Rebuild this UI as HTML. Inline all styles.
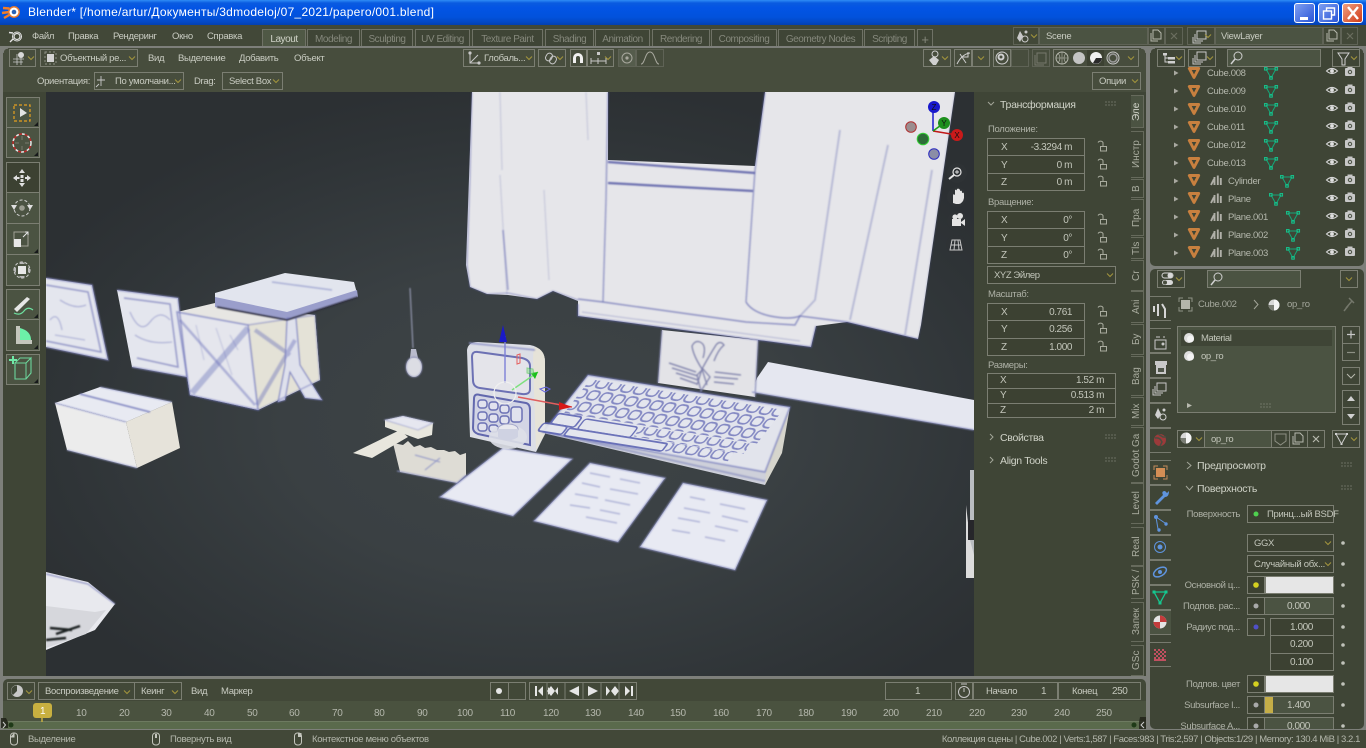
<!DOCTYPE html>
<html><head><meta charset="utf-8"><style>
*{box-sizing:border-box}
html,body{margin:0;padding:0;width:1366px;height:748px;overflow:hidden;background:#7d7f7a}
body{position:relative;font:10px "Liberation Sans","DejaVu Sans",sans-serif;color:#c9ccc2}
div,i,b{position:absolute;font-style:normal;font-weight:normal}
.p{background:#3f4536}
.h{background:#474d3d}
.b{border:1px solid #7b7e72}
.f{background:#4b5342;border:1px solid #7b7e72}
.a{background:#3c4132;border:1px solid #7b7e72}
i{white-space:nowrap;line-height:12px;height:12px;margin-top:1px;letter-spacing:-.32px;filter:blur(.2px)}
.tab{border:1px solid #6f7266;border-bottom:0;top:29px;height:17px;color:#85887c;text-align:center;line-height:19px;background:#3f4536;letter-spacing:-.45px}
.vt{writing-mode:vertical-rl;transform:rotate(180deg);text-align:center;left:1131px;width:13px;border:1px solid #666a5c;border-right:0;color:#a9ac9f;line-height:11px;background:#3f4536;font-size:10px}
.w{color:#b4b7ac}
.pt{left:1150px;width:21px;height:25px;border-top:1px solid #777a6e;border-bottom:1px solid #777a6e;background:#3f4536}
.l{color:#aeb1a6}
.n{color:#c3c6bb;letter-spacing:-.42px}
.hd{font-size:10.5px;color:#d0d3c8;letter-spacing:-.3px}
svg{position:absolute;left:0;top:0}
</style></head><body>

<!-- title bar -->
<div style="left:0;top:0;width:1366px;height:25px;background:linear-gradient(#2f8cf5 0,#0a5be0 3px,#0354e4 8px,#0252dc 17px,#0348c6 22px,#0340b0 25px)"></div>
<i style="left:28px;top:5px;font-size:12px;color:#fff;letter-spacing:.27px;line-height:13px;filter:none">Blender* [/home/artur/Документы/3dmodeloj/07_2021/papero/001.blend]</i>
<div style="left:1294px;top:3px;width:21px;height:20px;border:1px solid #fff;border-radius:3px;background:linear-gradient(135deg,#7f9ff0,#2a55d8)"></div>
<div style="left:1318px;top:3px;width:21px;height:20px;border:1px solid #fff;border-radius:3px;background:linear-gradient(135deg,#7f9ff0,#2a55d8)"></div>
<div style="left:1342px;top:3px;width:21px;height:20px;border:1px solid #fff;border-radius:3px;background:linear-gradient(135deg,#f0a080,#d03a18)"></div>

<!-- top bar -->
<div class="p" style="left:0;top:25px;width:1366px;height:21px;background:#424838"></div>
<i style="left:32px;top:30px;font-size:9.5px">Файл</i><i style="left:68px;top:30px;font-size:9.5px">Правка</i><i style="left:113px;top:30px;font-size:9.5px">Рендеринг</i><i style="left:172px;top:30px;font-size:9.5px">Окно</i><i style="left:207px;top:30px;font-size:9.5px">Справка</i>
<div class="tab" style="left:262px;width:44px;background:#4f5845;color:#d0d3c8">Layout</div>
<div class="tab" style="left:307px;width:53px">Modeling</div>
<div class="tab" style="left:361px;width:52px">Sculpting</div>
<div class="tab" style="left:415px;width:55px">UV Editing</div>
<div class="tab" style="left:472px;width:71px">Texture Paint</div>
<div class="tab" style="left:545px;width:49px">Shading</div>
<div class="tab" style="left:595px;width:55px">Animation</div>
<div class="tab" style="left:652px;width:58px">Rendering</div>
<div class="tab" style="left:711px;width:66px">Compositing</div>
<div class="tab" style="left:778px;width:85px">Geometry Nodes</div>
<div class="tab" style="left:864px;width:51px">Scripting</div>
<div class="tab" style="left:917px;width:16px;font-size:13px">+</div>
<div class="b" style="left:1013px;top:27px;width:26px;height:18px;border-color:#5f6356"></div>
<div class="f" style="left:1039px;top:27px;width:109px;height:18px;border-color:#5f6356"></div>
<div class="b" style="left:1148px;top:27px;width:17px;height:18px;border-color:#5f6356"></div>
<div class="b" style="left:1165px;top:27px;width:18px;height:18px;border-color:#5f6356"></div>
<i style="left:1046px;top:30px;font-size:9.5px">Scene</i>
<div class="b" style="left:1187px;top:27px;width:28px;height:18px;border-color:#5f6356"></div>
<div class="f" style="left:1215px;top:27px;width:108px;height:18px;border-color:#5f6356"></div>
<div class="b" style="left:1323px;top:27px;width:18px;height:18px;border-color:#5f6356"></div>
<div class="b" style="left:1341px;top:27px;width:17px;height:18px;border-color:#5f6356"></div>
<i style="left:1221px;top:30px;font-size:9.5px">ViewLayer</i>

<!-- 3D view -->
<div class="h" style="left:3px;top:48px;width:1143px;height:44px;border-radius:5px 5px 0 0"></div>
<div class="p" style="left:3px;top:92px;width:43px;height:584px"></div>
<div style="left:46px;top:92px;width:928px;height:584px;background:radial-gradient(ellipse 560px 340px at 490px 330px,#3e4447 0,#3a4043 45%,#2f3437 85%,#2c3033 100%)"></div>
<div class="p" style="left:974px;top:92px;width:172px;height:584px"></div>

<!-- header row 1 -->
<div class="b" style="left:9px;top:49px;width:27px;height:18px"></div>
<div class="b" style="left:40px;top:49px;width:98px;height:18px"></div>
<i style="left:60px;top:52px;font-size:9.5px">Объектный ре...</i>
<i style="left:148px;top:52px;font-size:9.5px">Вид</i><i style="left:178px;top:52px;font-size:9.5px">Выделение</i><i style="left:239px;top:52px;font-size:9.5px">Добавить</i><i style="left:294px;top:52px;font-size:9.5px">Объект</i>
<div class="b" style="left:463px;top:49px;width:72px;height:18px"></div><i style="left:484px;top:52px;font-size:9.5px">Глобаль...</i>
<div class="b" style="left:538px;top:49px;width:28px;height:18px"></div>
<div class="b" style="left:570px;top:49px;width:17px;height:18px"></div>
<div class="b" style="left:587px;top:49px;width:27px;height:18px"></div>
<div class="f" style="left:618px;top:49px;width:18px;height:18px;background:#555c4c;border-color:#5f6356"></div>
<div class="b" style="left:636px;top:49px;width:28px;height:18px;border-color:#5f6356"></div>
<div class="b" style="left:923px;top:49px;width:28px;height:18px"></div>
<div class="b" style="left:954px;top:49px;width:18px;height:18px"></div>
<div class="b" style="left:972px;top:49px;width:18px;height:18px"></div>
<div class="b" style="left:993px;top:49px;width:18px;height:18px"></div>
<div class="b" style="left:1011px;top:49px;width:18px;height:18px;border-color:#5f6356"></div>
<div class="b" style="left:1032px;top:49px;width:18px;height:18px;border-color:#5f6356"></div>
<div class="b" style="left:1053px;top:49px;width:86px;height:18px"></div>
<div style="left:1087px;top:50px;width:17px;height:16px;background:#3c4132"></div>

<!-- header row 2 -->
<i style="left:37px;top:75px;font-size:9.5px">Ориентация:</i>
<div class="b" style="left:94px;top:72px;width:90px;height:18px"></div><i style="left:115px;top:75px;font-size:9.5px">По умолчани...</i>
<i style="left:194px;top:75px;font-size:9.5px">Drag:</i>
<div class="b" style="left:222px;top:72px;width:61px;height:18px"></div><i style="left:229px;top:75px;font-size:9.5px">Select Box</i>
<div class="b" style="left:1092px;top:72px;width:49px;height:18px"></div><i style="left:1099px;top:75px;font-size:9.5px">Опции</i>

<!-- left tools -->
<div class="f" style="left:6px;top:97px;width:34px;height:31px"></div>
<div class="f" style="left:6px;top:127px;width:34px;height:31px"></div>
<div class="a" style="left:6px;top:162px;width:34px;height:31px"></div>
<div class="f" style="left:6px;top:192px;width:34px;height:32px"></div>
<div class="f" style="left:6px;top:223px;width:34px;height:32px"></div>
<div class="f" style="left:6px;top:254px;width:34px;height:32px"></div>
<div class="f" style="left:6px;top:289px;width:34px;height:31px"></div>
<div class="f" style="left:6px;top:319px;width:34px;height:32px"></div>
<div class="f" style="left:6px;top:354px;width:34px;height:31px"></div>

<!-- N panel -->
<i class="hd" style="left:1000px;top:98px">Трансформация</i>
<i class="l" style="left:988px;top:123px;font-size:9.5px">Положение:</i>
<div class="a" style="left:987px;top:138px;width:98px;height:18px"></div><div class="a" style="left:987px;top:155px;width:98px;height:19px"></div><div class="a" style="left:987px;top:173px;width:98px;height:18px"></div>
<i class="n" style="left:1001px;top:141px">X</i><i class="n" style="right:294px;top:141px">-3.3294 m</i>
<i class="n" style="left:1001px;top:159px">Y</i><i class="n" style="right:294px;top:159px">0 m</i>
<i class="n" style="left:1001px;top:176px">Z</i><i class="n" style="right:294px;top:176px">0 m</i>
<i class="l" style="left:988px;top:196px;font-size:9.5px">Вращение:</i>
<div class="a" style="left:987px;top:211px;width:98px;height:18px"></div><div class="a" style="left:987px;top:228px;width:98px;height:19px"></div><div class="a" style="left:987px;top:246px;width:98px;height:18px"></div>
<i class="n" style="left:1001px;top:214px">X</i><i class="n" style="right:294px;top:214px">0°</i>
<i class="n" style="left:1001px;top:232px">Y</i><i class="n" style="right:294px;top:232px">0°</i>
<i class="n" style="left:1001px;top:249px">Z</i><i class="n" style="right:294px;top:249px">0°</i>
<div class="a" style="left:987px;top:266px;width:129px;height:18px"></div><i class="n" style="left:994px;top:269px;font-size:9.5px">XYZ Эйлер</i>
<i class="l" style="left:988px;top:288px;font-size:9.5px">Масштаб:</i>
<div class="a" style="left:987px;top:303px;width:98px;height:18px"></div><div class="a" style="left:987px;top:320px;width:98px;height:19px"></div><div class="a" style="left:987px;top:338px;width:98px;height:18px"></div>
<i class="n" style="left:1001px;top:306px">X</i><i class="n" style="right:294px;top:306px">0.761</i>
<i class="n" style="left:1001px;top:323px">Y</i><i class="n" style="right:294px;top:323px">0.256</i>
<i class="n" style="left:1001px;top:341px">Z</i><i class="n" style="right:294px;top:341px">1.000</i>
<i class="l" style="left:988px;top:359px;font-size:9.5px">Размеры:</i>
<div class="a" style="left:987px;top:373px;width:129px;height:16px"></div><div class="a" style="left:987px;top:388px;width:129px;height:16px"></div><div class="a" style="left:987px;top:403px;width:129px;height:15px"></div>
<i class="n" style="left:1000px;top:374px">X</i><i class="n" style="right:262px;top:374px">1.52 m</i>
<i class="n" style="left:1000px;top:389px">Y</i><i class="n" style="right:262px;top:389px">0.513 m</i>
<i class="n" style="left:1000px;top:404px">Z</i><i class="n" style="right:262px;top:404px">2 m</i>
<i class="hd" style="left:1000px;top:431px">Свойства</i>
<i class="hd" style="left:1000px;top:454px">Align Tools</i>

<!-- N tabs -->
<div class="vt" style="top:95px;height:33px;background:#4b5342;color:#d0d3c8">Эле</div>
<div class="vt" style="top:131px;height:47px">Инстр</div>
<div class="vt" style="top:179px;height:19px">B</div>
<div class="vt" style="top:199px;height:37px">Пра</div>
<div class="vt" style="top:237px;height:22px">Tls</div>
<div class="vt" style="top:260px;height:31px">Cr</div>
<div class="vt" style="top:291px;height:32px">Ani</div>
<div class="vt" style="top:324px;height:31px">Бу</div>
<div class="vt" style="top:356px;height:40px">Bag</div>
<div class="vt" style="top:397px;height:29px">Mix</div>
<div class="vt" style="top:427px;height:56px">Godot Ga</div>
<div class="vt" style="top:483px;height:41px">Level</div>
<div class="vt" style="top:527px;height:39px">Real</div>
<div class="vt" style="top:566px;height:33px">PSK /</div>
<div class="vt" style="top:602px;height:40px">Запек</div>
<div class="vt" style="top:645px;height:31px">GSc</div>

<!-- outliner -->
<div class="p" style="left:1150px;top:48px;width:214px;height:218px;border-radius:5px"></div>
<div class="b" style="left:1157px;top:49px;width:28px;height:18px"></div>
<div class="b" style="left:1188px;top:49px;width:28px;height:18px"></div>
<div class="f" style="left:1227px;top:49px;width:94px;height:18px"></div>
<div class="b" style="left:1332px;top:49px;width:28px;height:18px"></div>
<i style="left:1207px;top:67px;font-size:9.5px" class="w">Cube.008</i>
<i style="left:1207px;top:85px;font-size:9.5px" class="w">Cube.009</i>
<i style="left:1207px;top:103px;font-size:9.5px" class="w">Cube.010</i>
<i style="left:1207px;top:121px;font-size:9.5px" class="w">Cube.011</i>
<i style="left:1207px;top:139px;font-size:9.5px" class="w">Cube.012</i>
<i style="left:1207px;top:157px;font-size:9.5px" class="w">Cube.013</i>
<i style="left:1228px;top:175px;font-size:9.5px" class="w">Cylinder</i>
<i style="left:1228px;top:193px;font-size:9.5px" class="w">Plane</i>
<i style="left:1228px;top:211px;font-size:9.5px" class="w">Plane.001</i>
<i style="left:1228px;top:229px;font-size:9.5px" class="w">Plane.002</i>
<i style="left:1228px;top:247px;font-size:9.5px" class="w">Plane.003</i>

<!-- properties -->
<div class="p" style="left:1150px;top:269px;width:214px;height:460px;border-radius:5px"></div>
<div class="b" style="left:1157px;top:270px;width:28px;height:18px"></div>
<div class="f" style="left:1207px;top:270px;width:94px;height:18px"></div>
<div class="b" style="left:1340px;top:270px;width:18px;height:18px"></div>
<div class="pt" style="top:296px"></div><div class="pt" style="top:328px"></div><div class="pt" style="top:353px"></div><div class="pt" style="top:378px"></div><div class="pt" style="top:403px"></div><div class="pt" style="top:428px"></div>
<div class="pt" style="top:460px"></div><div class="pt" style="top:485px"></div><div class="pt" style="top:510px"></div><div class="pt" style="top:535px"></div><div class="pt" style="top:560px"></div><div class="pt" style="top:585px"></div>
<div class="pt" style="top:610px;background:#4b5342"></div><div class="pt" style="top:642px"></div>
<i style="left:1198px;top:298px;font-size:9.5px;color:#a4a79c">Cube.002</i>
<i style="left:1287px;top:298px;font-size:9.5px;color:#a4a79c">op_ro</i>
<div class="f" style="left:1177px;top:326px;width:159px;height:87px"></div>
<div style="left:1181px;top:330px;width:151px;height:16px;background:#3f4536"></div>
<i style="left:1201px;top:332px;font-size:9.5px" class="n">Material</i>
<i style="left:1201px;top:350px;font-size:9.5px" class="n">op_ro</i>
<div class="b" style="left:1342px;top:326px;width:18px;height:18px"></div><div class="b" style="left:1342px;top:343px;width:18px;height:18px"></div>
<div class="b" style="left:1342px;top:367px;width:18px;height:18px"></div>
<div class="b" style="left:1342px;top:390px;width:18px;height:18px"></div><div class="b" style="left:1342px;top:407px;width:18px;height:18px"></div>

<div class="b" style="left:1177px;top:430px;width:28px;height:18px"></div>
<div class="f" style="left:1204px;top:430px;width:68px;height:18px"></div>
<i style="left:1211px;top:433px;font-size:9.5px" class="n">op_ro</i>
<div class="b" style="left:1271px;top:430px;width:19px;height:18px"></div><div class="b" style="left:1289px;top:430px;width:19px;height:18px"></div><div class="b" style="left:1307px;top:430px;width:18px;height:18px"></div>
<div class="b" style="left:1332px;top:430px;width:28px;height:18px"></div>
<i class="hd" style="left:1197px;top:459px;letter-spacing:-.2px">Предпросмотр</i>
<i class="hd" style="left:1197px;top:482px;letter-spacing:-.25px">Поверхность</i>
<i class="l" style="right:126px;top:508px;font-size:9.5px">Поверхность</i>
<div class="a" style="left:1247px;top:505px;width:87px;height:18px"></div><i class="n" style="left:1267px;top:508px;font-size:9.5px;letter-spacing:-.3px">Принц...ый BSDF</i>
<div class="a" style="left:1247px;top:534px;width:87px;height:18px"></div><i class="n" style="left:1254px;top:537px;font-size:9.5px">GGX</i>
<div class="a" style="left:1247px;top:555px;width:87px;height:18px"></div><i class="n" style="left:1254px;top:558px;font-size:9.5px;letter-spacing:-.3px">Случайный обх...</i>
<i class="l" style="right:126px;top:579px;font-size:9.5px">Основной ц...</i>
<div class="a" style="left:1247px;top:576px;width:18px;height:18px"></div><div style="left:1265px;top:576px;width:69px;height:18px;background:#e6e6e6;border:1px solid #7b7e72"></div>
<i class="l" style="right:126px;top:600px;font-size:9.5px">Подпов. рас...</i>
<div class="a" style="left:1247px;top:597px;width:18px;height:18px"></div><div class="f" style="left:1264px;top:597px;width:70px;height:18px"></div><i class="n" style="left:1287px;top:600px">0.000</i>
<i class="l" style="right:126px;top:621px;font-size:9.5px">Радиус под...</i>
<div class="a" style="left:1247px;top:618px;width:18px;height:18px"></div>
<div class="a" style="left:1270px;top:618px;width:64px;height:18px"></div><div class="a" style="left:1270px;top:635px;width:64px;height:19px"></div><div class="a" style="left:1270px;top:653px;width:64px;height:18px"></div>
<i class="n" style="left:1290px;top:621px">1.000</i><i class="n" style="left:1290px;top:638px">0.200</i><i class="n" style="left:1290px;top:656px">0.100</i>
<i class="l" style="right:126px;top:678px;font-size:9.5px">Подпов. цвет</i>
<div class="a" style="left:1247px;top:675px;width:18px;height:18px"></div><div style="left:1265px;top:675px;width:69px;height:18px;background:#e6e6e6;border:1px solid #7b7e72"></div>
<i class="l" style="right:126px;top:699px;font-size:9.5px">Subsurface l...</i>
<div class="a" style="left:1247px;top:696px;width:18px;height:18px"></div><div class="f" style="left:1264px;top:696px;width:70px;height:18px"></div><div style="left:1265px;top:697px;width:8px;height:16px;background:#c4ad47"></div><i class="n" style="left:1287px;top:699px">1.400</i>
<i class="l" style="right:126px;top:720px;font-size:9.5px">Subsurface A...</i>
<div style="left:1150px;top:717px;width:214px;height:12px;overflow:hidden">
<div class="a" style="left:97px;top:0;width:18px;height:18px"></div><div class="f" style="left:114px;top:0;width:70px;height:18px"></div><i class="n" style="left:137px;top:3px">0.000</i></div>

<!-- timeline -->
<div class="p" style="left:3px;top:679px;width:1143px;height:50px;background:#424838;border-radius:5px"></div>
<div style="left:3px;top:701px;width:1143px;height:20px;background:#4a523f"></div>
<div style="left:3px;top:721px;width:1143px;height:8px;background:#5a6a4c;border-top:1px solid #6d7a60"></div>
<div class="b" style="left:7px;top:682px;width:28px;height:18px"></div>
<div class="b" style="left:38px;top:682px;width:97px;height:18px"></div><i style="left:45px;top:685px;font-size:9.5px">Воспроизведение</i>
<div class="b" style="left:134px;top:682px;width:48px;height:18px"></div><i style="left:141px;top:685px;font-size:9.5px">Кеинг</i>
<i style="left:191px;top:685px;font-size:9.5px">Вид</i><i style="left:221px;top:685px;font-size:9.5px">Маркер</i>
<div class="b" style="left:490px;top:682px;width:19px;height:18px"></div><div class="b" style="left:508px;top:682px;width:18px;height:18px"></div>
<div class="b" style="left:529px;top:682px;width:108px;height:18px"></div>
<div class="b" style="left:885px;top:682px;width:67px;height:18px"></div><i class="n" style="left:915px;top:685px">1</i>
<div class="b" style="left:955px;top:682px;width:18px;height:18px"></div>
<div class="b" style="left:973px;top:682px;width:85px;height:18px"></div><i style="left:986px;top:685px;font-size:9.5px">Начало</i><i class="n" style="left:1041px;top:685px">1</i>
<div class="b" style="left:1058px;top:682px;width:83px;height:18px"></div><i style="left:1072px;top:685px;font-size:9.5px">Конец</i><i class="n" style="left:1112px;top:685px">250</i>
<div style="left:33px;top:703px;width:19px;height:15px;background:#c8b040;border-radius:3px"></div>
<i style="left:40px;top:705px;color:#fff">1</i>
<i class="w" style="left:76px;top:707px">10</i><i class="w" style="left:119px;top:707px">20</i><i class="w" style="left:161px;top:707px">30</i><i class="w" style="left:204px;top:707px">40</i><i class="w" style="left:247px;top:707px">50</i><i class="w" style="left:289px;top:707px">60</i><i class="w" style="left:332px;top:707px">70</i><i class="w" style="left:374px;top:707px">80</i><i class="w" style="left:417px;top:707px">90</i><i class="w" style="left:457px;top:707px">100</i><i class="w" style="left:500px;top:707px">110</i><i class="w" style="left:543px;top:707px">120</i><i class="w" style="left:585px;top:707px">130</i><i class="w" style="left:628px;top:707px">140</i><i class="w" style="left:670px;top:707px">150</i><i class="w" style="left:713px;top:707px">160</i><i class="w" style="left:756px;top:707px">170</i><i class="w" style="left:798px;top:707px">180</i><i class="w" style="left:841px;top:707px">190</i><i class="w" style="left:883px;top:707px">200</i><i class="w" style="left:926px;top:707px">210</i><i class="w" style="left:969px;top:707px">220</i><i class="w" style="left:1011px;top:707px">230</i><i class="w" style="left:1054px;top:707px">240</i><i class="w" style="left:1096px;top:707px">250</i>

<!-- status -->
<div style="left:0;top:730px;width:1366px;height:18px;background:#424838"></div>
<i class="w" style="left:28px;top:733px;font-size:9.5px">Выделение</i>
<i class="w" style="left:170px;top:733px;font-size:9.5px">Повернуть вид</i>
<i class="w" style="left:312px;top:733px;font-size:9.5px">Контекстное меню объектов</i>
<i class="w" style="right:6px;top:733px;font-size:9.5px;letter-spacing:-.42px">Коллекция сцены | Cube.002 | Verts:1,587 | Faces:983 | Tris:2,597 | Objects:1/29 | Memory: 130.4 MiB | 3.2.1</i>

<svg width="1366" height="748" viewBox="0 0 1366 748">
<defs>
<clipPath id="vp"><rect x="46" y="92" width="928" height="584"/></clipPath>
<clipPath id="ol"><rect x="1150" y="67" width="214" height="197"/></clipPath>
<filter id="s" x="-5%" y="-5%" width="110%" height="110%"><feGaussianBlur stdDeviation=".35"/></filter>
<filter id="s2" x="-5%" y="-5%" width="110%" height="110%"><feGaussianBlur stdDeviation=".8"/></filter>
<pattern id="keys" width="1" height="1" patternUnits="userSpaceOnUse"><rect x=".12" y=".14" width=".76" height=".72" rx=".26" fill="#e4e6ee" stroke="#5c63b2" stroke-width=".14" stroke-opacity=".8"/></pattern>
<g id="ch"><path d="M-3-1.5 0 1.5 3-1.5" fill="none" stroke="#a3953d" stroke-width="1"/></g>
<g id="ot"><path d="M-4.7-4.5H4.700L0 4.500Z" fill="none" stroke="#c8803f" stroke-width="2.900" stroke-linejoin="round"/></g>
<g id="gt"><path d="M-5-4H5L0 5Z" fill="none" stroke="#14a77a" stroke-width="1"/><rect x="-6.5" y="-5.5" width="2.6" height="2.6" fill="none" stroke="#14c890" stroke-width=".9"/><rect x="4" y="-5.5" width="2.6" height="2.6" fill="none" stroke="#14c890" stroke-width=".9"/><rect x="-1.3" y="3.6" width="2.6" height="2.6" fill="none" stroke="#14c890" stroke-width=".9"/></g>
<g id="ey"><path d="M-5.5 0Q0-5 5.5 0 0 5-5.5 0Z" fill="#3f4536" stroke="#d6d6d6" stroke-width="1.1"/><circle r="1.9" fill="#e0e0e0"/></g>
<g id="ca"><rect x="-5" y="-4" width="10" height="8" rx="1" fill="#c8c8c8"/><rect x="-2.5" y="-5.5" width="5" height="2" fill="#c8c8c8"/><circle r="2.2" fill="#50564a"/><circle r="1.1" fill="#c8c8c8"/></g>
<g id="ar"><path d="M-2-2.5 2.5 0-2 2.5Z" fill="#a8a8a0"/></g>
<g id="md"><path d="M-5 4-2-2M-1.5 4V-4M1.8 4V-5.5M4.8 4V-3" stroke="#b0b0a8" stroke-width="1.9" fill="none"/></g>
<g id="gr" fill="#8d9084"><circle cx="0" cy="0" r=".6"/><circle cx="3" cy="0" r=".6"/><circle cx="6" cy="0" r=".6"/><circle cx="9" cy="0" r=".6"/><circle cx="0" cy="3" r=".6"/><circle cx="3" cy="3" r=".6"/><circle cx="6" cy="3" r=".6"/><circle cx="9" cy="3" r=".6"/></g>
<g id="lk"><path d="M-5-4.5A3 3 0 0 1 0-4.5V-1" fill="none" stroke="#a9ac9f" stroke-width="1"/><rect x="-2.5" y="-.5" width="6" height="4.5" fill="none" stroke="#a9ac9f" stroke-width="1"/></g>
<g id="dt"><circle r="1.8" fill="#c0c2ba"/></g>
<g id="ms"><rect x="-3.5" y="-6" width="7" height="12" rx="3" fill="none" stroke="#c4c6bd" stroke-width="1"/></g>
<g id="sp"><circle r="5.5" fill="#d8d8d8"/><path d="M0-5.5A5.5 5.5 0 0 1 0 5.5Z" fill="#f4f4f4"/><path d="M-5.5 0A5.5 5.5 0 0 0 0 5.5V0Z" fill="#7a7d74"/></g>
<g id="mt"><circle r="5" fill="#dedede"/><circle cx="1.5" cy="1" r="3.5" fill="#f3f3f3"/></g>
<g id="cp"><path d="M-3-6H2L5-3V3H-3Z" fill="none" stroke="#b6b8ad"/><path d="M-5-3V5H2" fill="none" stroke="#b6b8ad"/></g>
<g id="xx"><path d="M-3-3 3 3M3-3-3 3" stroke="#b6b8ad" stroke-width="1.2" fill="none"/></g>
</defs>

<!-- ================= 3D scene ================= -->
<g clip-path="url(#vp)">
<g filter="url(#s)">
<!-- monitor stand -->
<path d="M662 330 758 340 755 397 658 383Z" fill="#e3e3e7"/>
<!-- curtains + window -->
<path d="M472 92H608V160L755 166 765 92H955L921 325 918 339 847 322 816 326 811 347 578 316 578 301 553 291 537 299 508 295 487 294 470 287 466 265Z" fill="#e6e6ea"/>
<!-- right edge object -->
<path d="M970 470V578H974V470Z" fill="#b9bcc0"/><path d="M966 505V578H974V555L970 540Z" fill="#dcdcdc"/><path d="M968 520H974V540H968Z" fill="#25282b"/>
<!-- plane right of keyboard -->
<path d="M768 362 974 400V430L752 392 757 378Z" fill="#e5e7f0"/>
<!-- keyboard -->
<path d="M790 407 782 453 765 485 763 470Z" fill="#d6d5cd"/>
<path d="M543 433 765 485 766 470 545 425Z" fill="#ced0da"/>
<path d="M588 375 790 407 765 472 543 432Z" fill="#e2e4ec"/>
<!-- phone -->
<path d="M467 350Q468 342 478 342L530 345Q545 348 545 362V434L536 452 470 437Z" fill="#dcdee6"/>
<path d="M535 347Q545 350 545 362V434L536 450 533 362Q533 350 535 347Z" fill="#e6e3d8"/>
<!-- papers -->
<path d="M503 448 572 459 513 516 440 497Z" fill="#e8eaf3"/>
<path d="M590 463 665 478 618 542 534 521Z" fill="#e8eaf3"/>
<path d="M683 483 767 500 735 570 640 547Z" fill="#e8eaf3"/>
<!-- hammer / comb -->
<path d="M393 443 403 445 408 441 414 447 420 445 425 448 431 447 437 450 444 450 449 452 455 451 460 455 466 453 466 475 457 483 400 472Z" fill="#dedcd5"/>
<path d="M353 453 400 430 408 437 372 458Z" fill="#e8e6dd"/>
<path d="M385 420 403 416 433 423 432 435 418 439 385 427Z" fill="#e8e7de"/>
<path d="M385 420 403 416 433 423 418 430Z" fill="#e6e7f0"/>
<!-- lamp -->
<ellipse cx="414" cy="367" rx="8" ry="10" fill="#dcdde4"/><path d="M411 349H416L418 358H410Z" fill="#b9bbcc"/>
<!-- frames -->
<path d="M46 278 92 285 108 360 46 347Z" fill="#e4e6ee"/>
<path d="M117 290 178 298 187 377 132 367Z" fill="#e4e6ee"/>
<!-- crate -->
<path d="M177 312 215 303 315 315 320 380 258 410 190 395Z" fill="#e7e6e3"/>
<path d="M177 312 248 325 258 410 190 395Z" fill="#e5e6ed"/>
<path d="M248 325 315 315 320 380 258 410Z" fill="#e4e2d7"/>
<path d="M287 318H296L300 365 322 400 305 398 290 372 285 400 278 402 285 365Z" fill="#dfe1ec"/>
<!-- lid -->
<path d="M215 293 285 273 354 282 358 297 287 320 215 307Z" fill="#e2e5ee"/>
<path d="M215 297 215 307 287 320 358 297 357 290 287 312Z" fill="#9a9ecb"/>
<!-- box -->
<path d="M55 403 100 387 172 402 126 422Z" fill="#e8eaf2"/>
<path d="M55 403 126 422 137 468 67 450Z" fill="#ececec"/>
<path d="M126 422 172 402 180 448 137 468Z" fill="#e6e3da"/>
<!-- book bottom left -->
<path d="M46 572 88 582 115 604 95 630 46 650Z" fill="#e8e9ee"/>
<path d="M46 606 95 612 106 610 86 634 46 648Z" fill="#d6d7dc"/>
</g>

<!-- soft texture lines -->
<g filter="url(#s2)" fill="none" stroke="#5d62ad">
<path d="M662 330 658 383M758 340 755 397" stroke="#8d90b8" stroke-width="1.2"/>
<g stroke="#7b7ea8" stroke-width="1.200"><path d="M697 385 702 369Q693 355 692 346 695 340 700 342 707 345 703 358M707 385 702 369Q709 356 716 345 720 340 724 345 718 350 714 361"/><path d="M669 363 696 372M672 368 698 376M676 373 698 380M680 378 697 384M741 375 715 372M738 379 714 377M734 384 714 382M697 375 701 391 710 377 703 369Z"/></g>
<path d="M472 92 470 180 467 265 470 287 487 294 508 293 537 299 553 291 578 300" stroke-width="1.100" opacity=".55"/>
<path d="M608 92 606 200 603 302M765 92 755 170 746 302" stroke-width="1.500" opacity=".55"/>
<path d="M608 162 755 173M608 183 753 191" stroke-width="2.200" opacity=".8" stroke="#4c51a0"/>
<path d="M578 299 603 302 746 322 795 325 800 316 847 322 918 339" stroke-width="1.400" opacity=".65"/>
<path d="M578 304V316L811 347 816 326" stroke-width="1.500" opacity=".6"/>
<path d="M582 312 800 341" stroke-width="1" opacity=".35"/>
<path d="M746 302Q752 312 770 316 790 320 800 316" stroke-width="1.500" opacity=".65"/>
<path d="M500 92 502 170M500 175 507 295M544 190 549 280M586 92 588 140" stroke-width="1" opacity=".25"/>
<path d="M503 230 508 290" stroke-width="1.600" opacity=".5"/>
<path d="M840 130 815 300 800 316M888 145 850 320M932 170 905 335" stroke-width="1.800" opacity=".35"/>
<path d="M955 92 921 325 918 339" stroke-width="1" opacity=".3"/>
<path d="M752 392 974 430" stroke="#8d92c4" stroke-width="1.200"/>
<path d="M588 375 790 407 765 472 543 432Z" stroke="#7379bb" stroke-width="1.400" opacity=".8"/>
<path d="M545 432 765 481" stroke="#6a70b4" stroke-width="1.800" opacity=".5"/>
<path d="M469 343 535 350" stroke="#8e93c8" stroke-width="1.400"/>
<path d="M503 448 572 459 513 516 440 497ZM590 463 665 478 618 542 534 521ZM683 483 767 500 735 570 640 547Z" stroke="#8d92c6" stroke-width="1.500" opacity=".8"/>
<g stroke="#8f94c8" stroke-width="1.200" opacity=".7"><path d="M590 473 610 477M620 479 640 483M582 483 600 487M610 489 638 494M575 494 598 498M605 500 630 505M570 505 590 508M600 510 620 514M586 517 617 523"/><path d="M690 497 705 500M720 504 745 509M684 508 710 513M722 516 748 522M678 518 700 522M715 526 738 531M672 530 690 533M705 537 725 541"/></g>
<path d="M397 471 457 483 466 475M415 455 440 462M425 470 440 458" stroke="#8f94c6" stroke-width="1"/>
<path d="M385 420 403 416 433 423 418 430Z" stroke="#a3a7d0" stroke-width=".8"/>
<path d="M410 288 413 348" stroke="#a5a8c4" stroke-width="1"/><ellipse cx="414" cy="367" rx="8" ry="10" stroke="#8e91b8"/>
<path d="M46 278 92 285 108 360 46 347M46 285 88 292 101 352 46 341M117 290 178 298 187 377 132 367M124 298 170 304 178 367 137 358" stroke="#8387bf" stroke-width="1.500" opacity=".8"/>
<path d="M50 320Q58 310 62 330M60 300Q75 310 86 305M55 335 85 340M130 312Q140 335 150 322T170 320M135 335Q150 345 172 342" stroke="#9397ca" stroke-width="1.100" opacity=".7"/>
<g stroke="#6a70ba"><path d="M177 312 248 325 258 410 190 395Z" stroke-width="1.600" opacity=".65"/><path d="M248 325 315 315 320 380 258 410" stroke-width="1.300" opacity=".5"/><path d="M248 328 192 393" stroke-width="6" opacity=".4"/><path d="M180 320 255 405" stroke-width="2.500" opacity=".45"/><path d="M257 405 295 340M255 330 290 355" stroke-width="4" opacity=".42"/><path d="M196 325 204 360M216 328 232 375M230 335 238 350" stroke-width="1" opacity=".3"/></g>
<path d="M287 318H296L300 365 322 400 305 398 290 372 285 400 278 402 285 365Z" stroke="#7a7fbe" stroke-width="1"/>
<path d="M217 307 287 320 358 297" stroke="#2c2c3a" stroke-width="1.500"/>
<path d="M272 282 332 290" stroke="#aab0d6" stroke-width="1.500"/>
<path d="M80 394 150 412" stroke="#7f84c0" stroke-width="1.500"/>
<path d="M55 403 126 422M67 450 137 468M100 387 172 402" stroke="#9da2d0" stroke-width="1"/>
<path d="M50 628 72 630M56 634 80 626M46 640 66 638" stroke="#1e2022" stroke-width="2.500"/>
<path d="M46 574 88 584 115 604" stroke="#8f93c4" stroke-width="1.200"/>
</g>

<!-- keyboard keys -->
<g filter="url(#s)" opacity=".88">
<g transform="matrix(12.6 2 -9 11.6 588 375)"><rect x=".4" y=".3" width="15.3" height="2.9" fill="url(#keys)"/>
<rect x=".0" y="3.3" width="1.9" height=".9" rx=".2" fill="#e4e6ee" stroke="#5c63b2" stroke-width=".14"/><rect x="2.2" y="3.4" width="4.2" height=".9" rx=".2" fill="#e4e6ee" stroke="#5c63b2" stroke-width=".12"/><rect x="6.6" y="3.3" width="8.7" height=".85" fill="url(#keys)"/>
<rect x="-.5" y="4.2" width="1.9" height=".7" rx=".2" fill="#e4e6ee" stroke="#5c63b2" stroke-width=".14"/><rect x="1.6" y="4.3" width="7.8" height=".65" rx=".15" fill="#e4e6ee" stroke="#5c63b2" stroke-width=".14"/><rect x="9.6" y="4.2" width="5" height=".72" fill="url(#keys)"/></g>
</g>
<!-- phone details -->
<g filter="url(#s)">
<path d="M472 357Q472 351 478 352L522 358Q530 360 530 366V389Q530 395 522 394L480 388Q473 387 473 380Z" fill="#e4e4ea" stroke="#585daa" stroke-width="2" stroke-opacity=".85"/>
<path d="M474 399Q474 393 480 395L526 403Q530 404 530 410V445L478 434Q473 432 473 428Z" fill="#d3d5e5" stroke="#4e54a3" stroke-width="2" stroke-opacity=".85"/>
<g fill="#e1e2ee" stroke="#5056a6" stroke-width="1.500" stroke-opacity=".8">
<rect x="478" y="400" width="9" height="8" rx="3"/><rect x="489" y="402" width="9" height="8" rx="3"/><rect x="500" y="405" width="9" height="8" rx="3"/><rect x="511" y="407" width="11" height="15" rx="3"/>
<rect x="478" y="412" width="9" height="8" rx="3"/><rect x="489" y="414" width="9" height="8" rx="3"/><rect x="500" y="416" width="9" height="8" rx="3"/><rect x="478" y="423" width="9" height="8" rx="3"/><rect x="489" y="425" width="9" height="7" rx="3"/></g>
<ellipse cx="508" cy="437" rx="19" ry="12" fill="#dee0e8" opacity=".9"/><ellipse cx="508" cy="429" rx="10" ry="5" fill="#e8e8ee" stroke="#a6a9cb"/><path d="M498 429V437Q508 444 518 437V429" fill="#cfd2e2"/>
</g>

<!-- gizmo -->
<path d="M505 383V336" stroke="#7d80d8" stroke-width="1.4"/><path d="M503 325 507 342H499Z" fill="#1a1ac8"/>
<path d="M518 397 572 407" stroke="#e05e5e" stroke-width="1.4"/><path d="M572 407 559 410 559 402Z" fill="#d81818"/>
<path d="M512 390 538 372" stroke="#7ee07e" stroke-width="1.4"/><path d="M538 372 531 373 535 379Z" fill="#18c018"/>
<circle cx="505" cy="393" r="11" fill="none" stroke="#f0f0f0" stroke-width="1.2"/>
<path d="M517 355 520 354V363L517 364Z" fill="none" stroke="#e46060"/><path d="M527 368 533 369 534 375 527 373Z" fill="#7ee07e" opacity=".5" stroke="#36c036"/><path d="M540 389 546 387 550 389 545 392Z" fill="none" stroke="#6464e0"/>

<!-- nav gizmo -->
<path d="M933 131V107" stroke="#1a1ad0" stroke-width="1.5"/><path d="M933 131 957 135" stroke="#c01818" stroke-width="1.5"/><path d="M933 131 944 123" stroke="#18a018" stroke-width="1.5"/>
<circle cx="934" cy="107" r="6" fill="#1717cc"/><circle cx="957" cy="135" r="6" fill="#c91a1a"/><circle cx="944" cy="123" r="6" fill="#1d8f1d"/>
<circle cx="911" cy="127" r="5.3" fill="#9b8d8f" stroke="#b03030" stroke-width="1"/><circle cx="923" cy="139" r="5.8" fill="#2e6c38" stroke="#33d033" stroke-width="1"/><circle cx="934" cy="154" r="5.3" fill="#8b8da6" stroke="#2c2cc0" stroke-width="1"/>
<g font-family="Liberation Sans,sans-serif" font-size="8" text-anchor="middle" fill="#111"><text x="934" y="110">Z</text><text x="957" y="138">X</text><text x="944" y="126">Y</text></g>
<g fill="#2e3235"><circle cx="957" cy="173" r="10"/><circle cx="957" cy="197" r="10"/><circle cx="957" cy="221" r="10"/><circle cx="956" cy="245" r="10"/></g>
<g fill="none" stroke="#e4e4e4" stroke-width="1.2"><circle cx="957" cy="172" r="4"/><path d="M954 175 949 179" stroke-width="2"/><path d="M955 172H959M957 170V174" stroke-width=".9"/></g>
<path d="M953 203V196Q953 193 955 195V190Q957 189 957 191V189Q959 188 960 190V191Q962 190 962 192V193Q964 192 964 194V198Q963 203 959 204H956Z" fill="#e4e4e4"/>
<g fill="#e4e4e4"><rect x="952" y="219" width="9" height="7"/><circle cx="955" cy="217" r="2.6"/><circle cx="960" cy="216" r="3"/><path d="M961 222 965 219V226L961 223Z"/></g>
<path d="M952 240H960L962 250H950ZM955 240 954 250M958 240 959 250M951 245H961" fill="none" stroke="#c8c8c8" stroke-width="1"/>
</g>

<!-- ================= top bar icons ================= -->
<g><circle cx="14" cy="12" r="4.6" fill="#fff"/><circle cx="14" cy="12" r="2.3" fill="#2862b6"/><path d="M9.5 8.5 3 8M10 14.5 4 18M9 12 2 13" stroke="#f07c28" stroke-width="2.4"/><circle cx="14" cy="12" r="5.2" fill="none" stroke="#f07c28" stroke-width="1.4"/></g>
<g fill="none" stroke="#e4e4e4"><circle cx="17" cy="36.500" r="3" stroke-width="1.2"/><path d="M13 33 9 32.500M13 39 10 42" stroke-width="1.4"/><circle cx="17" cy="36.500" r="4.500"/></g>
<path d="M1300 17H1308V20H1300Z" fill="#fff"/>
<g fill="none" stroke="#fff" stroke-width="1.4"><rect x="1323.500" y="11" width="8" height="8"/><path d="M1326.500 11V8H1334.500V15H1331.500"/></g>
<path d="M1348 7 1358 19M1358 7 1348 19" stroke="#fff" stroke-width="2.4"/>
<!-- scene -->
<g fill="#c8c8c8"><path d="M1020 31 1023 36 1020 42 1017 38Z"/></g><circle cx="1025" cy="39" r="3" fill="none" stroke="#c8c8c8"/><circle cx="1026" cy="32" r="1.5" fill="#c8c8c8"/><use href="#ch" x="1034" y="36"/>
<use href="#cp" x="1156" y="36"/><use href="#xx" x="1174" y="36" opacity=".35"/>
<g fill="none" stroke="#c8c8c8"><rect x="1197" y="31" width="9" height="8"/><path d="M1195 34V41H1203M1193 37V43H1201"/></g><use href="#ch" x="1208" y="36"/>
<use href="#cp" x="1332" y="36"/><use href="#xx" x="1350" y="36" opacity=".35"/>

<!-- ================= 3D header icons ================= -->
<g fill="none" stroke="#c8c8c8"><path d="M13 59H24M13 62H23M17 54V65M21 54V65" stroke-width=".8"/></g><circle cx="21" cy="55" r="3" fill="#d8d8d8"/><use href="#ch" x="31" y="58"/>
<rect x="45" y="52" width="11" height="12" fill="none" stroke="#8f9286" stroke-dasharray="2 2"/><rect x="47" y="54" width="7" height="8" fill="#d4d4d4"/><use href="#ch" x="132" y="58"/>
<path d="M470 53V63H480M470 63 478 55" stroke="#c8c8c8" fill="none"/><circle cx="470" cy="53" r="1.6" fill="#c8c8c8"/><circle cx="479" cy="63" r="1.6" fill="#c8c8c8"/><use href="#ch" x="529" y="58"/>
<g fill="none" stroke="#c8c8c8"><rect x="546" y="53" width="6" height="8" rx="3" transform="rotate(30 549 57)"/><rect x="550" y="56" width="6" height="8" rx="3" transform="rotate(30 553 60)"/></g><use href="#ch" x="560" y="58"/>
<path d="M573 58A5 5 0 0 1 583 58V63H580V58A2 2 0 0 0 576 58V63H573Z" fill="#f0f0f0"/>
<path d="M591 61H606M591 58V64M606 58V64M598 58V64" stroke="#c8c8c8" fill="none"/><rect x="597" y="52" width="3" height="3" fill="#c8c8c8"/><use href="#ch" x="608" y="58"/>
<circle cx="627" cy="58" r="5" fill="none" stroke="#a8a89e"/><circle cx="627" cy="58" r="1.6" fill="#a8a89e"/>
<path d="M641 64C645 64 645 52 650 52S655 64 659 64" fill="none" stroke="#a8a89e"/>
<path d="M929 60 934 56 939 60 936 65 933 65Z" fill="#d0d0d0"/><circle cx="935" cy="54" r="3" fill="none" stroke="#d0d0d0"/><use href="#ch" x="945" y="58"/>
<path d="M957 64Q962 54 970 53M960 54 966 63M968 52V57H963" fill="none" stroke="#d0d0d0"/><use href="#ch" x="981" y="58"/>
<circle cx="1002" cy="58" r="6" fill="none" stroke="#d0d0d0"/><circle cx="1001" cy="57" r="3.500" fill="#d0d0d0"/><circle cx="1001" cy="57" r="1.500" fill="#474d3d"/>
<path d="M1037 53H1046V63H1037ZM1035 55V65H1044" fill="none" stroke="#77796d"/>
<circle cx="1062" cy="58" r="6" fill="none" stroke="#b6b8ad"/><path d="M1056 58H1068M1062 52V64M1058 53Q1062 58 1058 63M1066 53Q1062 58 1066 63" fill="none" stroke="#b6b8ad" stroke-width=".6"/>
<circle cx="1079" cy="58" r="6" fill="#c4c4c4"/>
<circle cx="1096" cy="58" r="6" fill="#f0f0f0"/><path d="M1096 58H1102A6 6 0 0 1 1093 63Z" fill="#2a2a2a"/>
<circle cx="1113" cy="58" r="6" fill="none" stroke="#c8c8c8"/><circle cx="1113" cy="58" r="4" fill="none" stroke="#9a9a9a" stroke-width="1.500"/>
<use href="#ch" x="1131" y="58"/>
<path d="M101 76V86M97 80H105M99 84 96 87" stroke="#c8c8c8" stroke-width=".9" fill="none"/><use href="#ch" x="178" y="81"/><use href="#ch" x="276" y="81"/><use href="#ch" x="1135" y="81"/>

<!-- ================= toolbar icons ================= -->
<rect x="14" y="105" width="16" height="16" fill="none" stroke="#e6a020" stroke-dasharray="3 2" stroke-width="1.2"/><path d="M20 108 27 113 20 117Z" fill="#e4e4e4"/>
<circle cx="22" cy="143" r="9" fill="none" stroke="#e8e8e8" stroke-width="1.500" stroke-dasharray="3 3"/><circle cx="22" cy="143" r="9" fill="none" stroke="#c02828" stroke-width="1.500" stroke-dasharray="3 3" stroke-dashoffset="3"/><path d="M22 136V140M22 146V150M15 143H19M25 143H29" stroke="#6a6e60" stroke-width="1.500"/>
<g fill="#e0e0e0"><path d="M22 169 25 173H19ZM22 187 25 183H19ZM13 178 17 175V181ZM31 178 27 175V181Z"/><rect x="20.500" y="175" width="3" height="3"/><rect x="20.500" y="179" width="3" height="3"/><rect x="17" y="177" width="2.500" height="2"/><rect x="25" y="177" width="2.500" height="2"/></g>
<circle cx="22" cy="208" r="8" fill="none" stroke="#d0d0d0" stroke-dasharray="3 2"/><circle cx="22" cy="208" r="2.800" fill="#9a9c90"/><path d="M14 210 11 205H17ZM30 210 33 205H27Z" fill="#e0e0e0"/>
<rect x="14" y="232" width="14" height="14" fill="none" stroke="#a0a297"/><rect x="14" y="239" width="7" height="8" fill="#e8e8e8"/><path d="M23 237 28 232M25 232H28V235" stroke="#e8e8e8" fill="none"/>
<circle cx="22" cy="270" r="8" fill="none" stroke="#d0d0d0" stroke-dasharray="3 2"/><rect x="18" y="266" width="8" height="8" fill="#e8e8e8"/><path d="M13 270 16 267V273ZM31 270 28 267V273ZM22 261 19 264H25ZM22 279 19 276H25Z" fill="#b8b8b8"/>
<path d="M14 309 27 297 30 299 17 312Z" fill="#e6e6e6"/><path d="M14 313Q20 316 24 311T33 310" fill="none" stroke="#6de0a0" stroke-width="1.200"/>
<path d="M16 326V344H32V340H20V326Z" fill="#c4c6bd"/><path d="M20 328V340H31Q31 331 20 328Z" fill="#6cf0a8"/>
<path d="M15 363H26L31 358V373L26 379H15Z" fill="none" stroke="#6cd69c" stroke-width="1.100"/><path d="M15 363 20 358H31M26 363V379" fill="none" stroke="#6cd69c"/><path d="M13 356V364M9 360H17" stroke="#70e8a8" stroke-width="2"/>
<path d="M38 126V122L34 126ZM38 156V152L34 156ZM38 253V249L34 253ZM38 318V314L34 318ZM38 383V379L34 383ZM38 349V345L34 349Z" fill="#16181a"/>

<!-- ================= N panel icons ================= -->
<path d="M988 102 991 105 994 102" stroke="#a2a598" fill="none"/><path d="M990 434 993 437 990 440M990 457 993 460 990 463" stroke="#a2a598" fill="none"/>
<use href="#gr" x="1106" y="102"/><use href="#gr" x="1106" y="435"/><use href="#gr" x="1106" y="458"/>
<use href="#lk" x="1103" y="147"/><use href="#lk" x="1103" y="165"/><use href="#lk" x="1103" y="182"/><use href="#lk" x="1103" y="220"/><use href="#lk" x="1103" y="238"/><use href="#lk" x="1103" y="255"/><use href="#lk" x="1103" y="312"/><use href="#lk" x="1103" y="329"/><use href="#lk" x="1103" y="347"/>
<use href="#ch" x="1110" y="275"/>

<!-- ================= outliner icons ================= -->
<g fill="#cfcfcf"><rect x="1163" y="53" width="4" height="2.500"/><rect x="1168" y="57" width="7" height="2.500"/><rect x="1168" y="61" width="7" height="2.500"/></g><path d="M1165 55V62H1168M1165 58H1168" stroke="#cfcfcf" fill="none"/><use href="#ch" x="1179" y="58"/>
<g fill="none" stroke="#c8c8c8"><rect x="1197" y="52" width="9" height="8"/><path d="M1195 55V62H1203M1193 58V64H1201"/></g><use href="#ch" x="1210" y="58"/>
<g fill="none" stroke="#d0d0d0"><circle cx="1238" cy="56" r="4"/><path d="M1235 59 1231 64" stroke-width="1.500"/></g>
<path d="M1338 53H1349L1345 59V65H1342V59Z" fill="none" stroke="#d0d0d0"/><use href="#ch" x="1354" y="58"/>
<g clip-path="url(#ol)">
<use href="#ar" x="1176" y="73"/><use href="#ot" x="1194" y="73"/><use href="#gt" x="1271" y="73"/><use href="#ey" x="1332" y="71"/><use href="#ca" x="1350" y="72"/>
<use href="#ar" x="1176" y="91"/><use href="#ot" x="1194" y="91"/><use href="#gt" x="1271" y="91"/><use href="#ey" x="1332" y="90"/><use href="#ca" x="1350" y="90"/>
<use href="#ar" x="1176" y="109"/><use href="#ot" x="1194" y="109"/><use href="#gt" x="1271" y="109"/><use href="#ey" x="1332" y="108"/><use href="#ca" x="1350" y="108"/>
<use href="#ar" x="1176" y="127"/><use href="#ot" x="1194" y="127"/><use href="#gt" x="1271" y="127"/><use href="#ey" x="1332" y="126"/><use href="#ca" x="1350" y="126"/>
<use href="#ar" x="1176" y="145"/><use href="#ot" x="1194" y="145"/><use href="#gt" x="1271" y="145"/><use href="#ey" x="1332" y="144"/><use href="#ca" x="1350" y="144"/>
<use href="#ar" x="1176" y="163"/><use href="#ot" x="1194" y="163"/><use href="#gt" x="1271" y="163"/><use href="#ey" x="1332" y="162"/><use href="#ca" x="1350" y="162"/>
<use href="#ar" x="1176" y="181"/><use href="#ot" x="1194" y="180"/><use href="#md" x="1216" y="181"/><use href="#gt" x="1287" y="181"/><use href="#ey" x="1332" y="180"/><use href="#ca" x="1350" y="180"/>
<use href="#ar" x="1176" y="199"/><use href="#ot" x="1194" y="198"/><use href="#md" x="1216" y="199"/><use href="#gt" x="1276" y="199"/><use href="#ey" x="1332" y="198"/><use href="#ca" x="1350" y="198"/>
<use href="#ar" x="1176" y="217"/><use href="#ot" x="1194" y="216"/><use href="#md" x="1216" y="217"/><use href="#gt" x="1293" y="217"/><use href="#ey" x="1332" y="216"/><use href="#ca" x="1350" y="216"/>
<use href="#ar" x="1176" y="235"/><use href="#ot" x="1194" y="234"/><use href="#md" x="1216" y="235"/><use href="#gt" x="1293" y="235"/><use href="#ey" x="1332" y="234"/><use href="#ca" x="1350" y="234"/>
<use href="#ar" x="1176" y="253"/><use href="#ot" x="1194" y="252"/><use href="#md" x="1216" y="253"/><use href="#gt" x="1293" y="253"/><use href="#ey" x="1332" y="252"/><use href="#ca" x="1350" y="252"/>
</g>

<!-- ================= properties icons ================= -->
<rect x="1162" y="273" width="11" height="5" rx="2.500" fill="none" stroke="#d8d8d8"/><circle cx="1170" cy="275.500" r="2.500" fill="#d8d8d8"/><rect x="1162" y="280" width="11" height="5" rx="2.500" fill="#d8d8d8"/><circle cx="1165" cy="282.500" r="2" fill="#474d3d"/><use href="#ch" x="1179" y="279"/>
<g fill="none" stroke="#d0d0d0"><circle cx="1218" cy="277" r="4"/><path d="M1215 280 1211 285" stroke-width="1.500"/></g><use href="#ch" x="1349" y="279"/>
<path d="M1154 312V306M1158 304V316M1162 304 1165 309V318" stroke="#d6d6d6" stroke-width="2" fill="none"/>
<rect x="1155" y="340" width="11" height="9" fill="none" stroke="#c8c8c8"/><path d="M1156 337H1160M1163 337H1165" stroke="#c8c8c8"/><circle cx="1163" cy="344" r="1.500" fill="#c8c8c8"/>
<path d="M1155 361H1167V365H1155ZM1156 365V374H1166V365" fill="#c8c8c8"/><rect x="1158" y="368" width="6" height="4" fill="#50564a"/>
<g fill="none" stroke="#c8c8c8"><rect x="1157" y="383" width="9" height="8"/><path d="M1155 386V393H1163M1153 389V395H1161"/></g>
<path d="M1158 408 1161 414 1158 419 1155 415Z" fill="#d0d0d0"/><circle cx="1163" cy="417" r="3" fill="none" stroke="#d0d0d0"/><circle cx="1164" cy="410" r="1.500" fill="#d0d0d0"/>
<circle cx="1160" cy="440" r="6" fill="#9c3a3a"/><path d="M1155 438Q1160 437 1162 442L1160 446M1158 434 1163 437 1166 437" stroke="#4a4d40" stroke-width="1.500" fill="none"/>
<rect x="1156" y="468" width="9" height="9" fill="#d48e55"/><path d="M1154 470V466H1158M1163 466H1167V470M1167 475V479H1163M1158 479H1154V475" stroke="#c08a5c" fill="none"/>
<path d="M1155 503 1163 495Q1161 491 1165 491L1167 493 1169 491Q1169 497 1165 497L1157 505Z" fill="#5f94de"/>
<path d="M1156 517 1165 523M1156 517 1158 529" stroke="#5f94de" fill="none"/><circle cx="1156" cy="517" r="2" fill="#5f94de"/><circle cx="1166" cy="524" r="1.700" fill="#5f94de"/><circle cx="1159" cy="530" r="1.700" fill="#5f94de"/>
<circle cx="1160" cy="547" r="5.500" fill="none" stroke="#5f94de"/><circle cx="1160" cy="547" r="2.500" fill="#5f94de"/>
<ellipse cx="1160" cy="572" rx="7" ry="4" transform="rotate(-30 1160 572)" fill="none" stroke="#5f94de" stroke-width="1.500"/><circle cx="1160" cy="572" r="2" fill="#5f94de"/>
<path d="M1154 592H1166L1160 603Z" fill="none" stroke="#14c890" stroke-width="1.300"/><rect x="1152.500" y="590.500" width="3" height="3" fill="#14c890"/><rect x="1164.500" y="590.500" width="3" height="3" fill="#14c890"/><rect x="1158.500" y="601.500" width="3" height="3" fill="#14c890"/>
<circle cx="1160" cy="622" r="6.500" fill="#e4e4e4"/><path d="M1160 622V615.500A6.500 6.500 0 0 1 1166.500 622ZM1160 622V628.500A6.500 6.500 0 0 1 1153.500 622Z" fill="#c43c3c"/>
<g fill="#c05060"><rect x="1154" y="649" width="12" height="12"/></g><g fill="#3f4536"><rect x="1156" y="649" width="2" height="2"/><rect x="1160" y="649" width="2" height="2"/><rect x="1164" y="649" width="2" height="2"/><rect x="1154" y="651" width="2" height="2"/><rect x="1158" y="651" width="2" height="2"/><rect x="1162" y="651" width="2" height="2"/><rect x="1156" y="653" width="2" height="2"/><rect x="1160" y="653" width="2" height="2"/><rect x="1164" y="653" width="2" height="2"/><rect x="1154" y="655" width="2" height="2"/><rect x="1158" y="655" width="2" height="2"/><rect x="1162" y="655" width="2" height="2"/><rect x="1156" y="657" width="2" height="2"/><rect x="1160" y="657" width="2" height="2"/><rect x="1164" y="657" width="2" height="2"/></g>
<!-- breadcrumb -->
<rect x="1181" y="300" width="9" height="9" fill="#b4b6aa"/><path d="M1179 302V298H1183M1188 298H1192V302M1192 307V311H1188M1183 311H1179V307" stroke="#8f9286" fill="none"/>
<path d="M1254 300 1258 304.500 1254 309" stroke="#a2a598" fill="none"/><use href="#sp" x="1274" y="305"/>
<path d="M1346 308 1352 301M1349 298 1354 303M1348 306 1344 311" stroke="#74776b" stroke-width="1.500" fill="none"/>
<use href="#mt" x="1189" y="338"/><use href="#mt" x="1189" y="356"/>
<path d="M1347 334.500H1355M1351 330.500V338.500" stroke="#c8c8c8" stroke-width="1.200"/><path d="M1347 352.500H1355" stroke="#8d9084" stroke-width="1.200"/>
<path d="M1347 374 1351 378 1355 374" stroke="#b8baaf" fill="none"/><path d="M1351 396 1355 401H1347Z" fill="#d0d0d0"/><path d="M1351 419 1355 414H1347Z" fill="#d0d0d0"/>
<path d="M1187 403 1192 405.500 1187 408Z" fill="#b8baaf"/><use href="#gr" x="1261" y="404"/>
<use href="#sp" x="1186" y="438"/><use href="#ch" x="1199" y="439"/>
<path d="M1275 434H1286V441L1280.500 445 1275 441Z" fill="none" stroke="#8d9084"/><use href="#cp" x="1298" y="439"/><use href="#xx" x="1316" y="439"/>
<path d="M1336 434H1347L1341.500 444Z" fill="none" stroke="#d0d0d0"/><rect x="1335" y="433" width="2" height="2" fill="#d0d0d0"/><rect x="1346" y="433" width="2" height="2" fill="#d0d0d0"/><rect x="1340.500" y="443" width="2" height="2" fill="#d0d0d0"/><use href="#ch" x="1354" y="439"/>
<path d="M1187 462 1191 465.500 1187 469" stroke="#a2a598" fill="none"/><path d="M1186 486 1189.500 490 1193 486" stroke="#a2a598" fill="none"/><use href="#gr" x="1342" y="463"/><use href="#gr" x="1342" y="486"/>
<circle cx="1256" cy="514" r="2.500" fill="#4fd04f"/><use href="#ch" x="1328" y="543"/><use href="#ch" x="1328" y="564"/>
<circle cx="1256" cy="585" r="2.800" fill="#d4d020"/><circle cx="1256" cy="606" r="2.500" fill="#a9a9a9"/><circle cx="1256" cy="627" r="2.500" fill="#5050c8"/><circle cx="1256" cy="684" r="2.800" fill="#d4d020"/><circle cx="1256" cy="705" r="2.500" fill="#a9a9a9"/><circle cx="1256" cy="726" r="2.500" fill="#a9a9a9"/>
<use href="#dt" x="1343" y="543"/><use href="#dt" x="1343" y="564"/><use href="#dt" x="1343" y="585"/><use href="#dt" x="1343" y="606"/><use href="#dt" x="1343" y="627"/><use href="#dt" x="1343" y="645"/><use href="#dt" x="1343" y="663"/><use href="#dt" x="1343" y="684"/><use href="#dt" x="1343" y="705"/><use href="#dt" x="1343" y="726"/>

<!-- ================= timeline icons ================= -->
<circle cx="17" cy="691" r="6" fill="#c8c8c8"/><path d="M17 691V685.500A5.500 5.500 0 0 0 13 695Z" fill="#3f4536"/><use href="#ch" x="29" y="692"/><use href="#ch" x="127" y="692"/><use href="#ch" x="175" y="692"/>
<circle cx="499" cy="691" r="3" fill="#e6e6e6"/>
<g fill="#e6e6e6"><path d="M535 686H537V696H535ZM543 686V696L538 691Z"/><path d="M551 686 555 691 551 696 547 691ZM558 687V695L555 691ZM548 687 551 691 548 695"/><path d="M579 686V696L569 691Z"/><path d="M588 686 598 691 588 696Z"/><path d="M606 686 610 691 606 696ZM615 686 619 691 615 696 611 691Z"/><path d="M625 686 630 691 625 696ZM631 686H633V696H631Z"/></g>
<path d="M565 683V699M583 683V699M601 683V699M619 683V699M547 683V699" stroke="#7b7e72"/>
<circle cx="964" cy="692" r="5.500" fill="none" stroke="#c8c8c8"/><path d="M961 684H967M964 692V688" stroke="#c8c8c8" fill="none"/>
<path d="M42 718V722" stroke="#c8b040" stroke-width="1.500"/>
<path d="M1 718H6L8 722V728H1Z" fill="#1f2118" opacity=".85"/><path d="M1140 717 1146 717V729H1139V722Z" fill="#1f2118" opacity=".8"/>
<path d="M3 722 5.500 725 3 728" stroke="#cfcfcf" fill="none"/><path d="M1144 722 1141 725 1144 728" stroke="#cfcfcf" fill="none"/>
<circle cx="11" cy="725" r="2.500" fill="#1f3a18"/><circle cx="1134" cy="725" r="2.500" fill="#1f3a18"/>

<!-- status icons -->
<use href="#ms" x="14" y="739"/><path d="M10.500 737H14V733" fill="#c4c6bd" stroke="#c4c6bd"/>
<use href="#ms" x="156" y="739"/><path d="M155 734H157V738H155Z" fill="#c4c6bd"/>
<use href="#ms" x="298" y="739"/><path d="M298 733H301.500V737H298Z" fill="#c4c6bd"/>

<!-- area border corners -->
<path d="M3 53Q3 48 8 48M1146 53Q1146 48 1141 48M1150 53Q1150 48 1155 48M1364 53Q1364 48 1359 48" fill="none" stroke="#7d7f7a" stroke-width="1.500"/>
</svg>
</body></html>
